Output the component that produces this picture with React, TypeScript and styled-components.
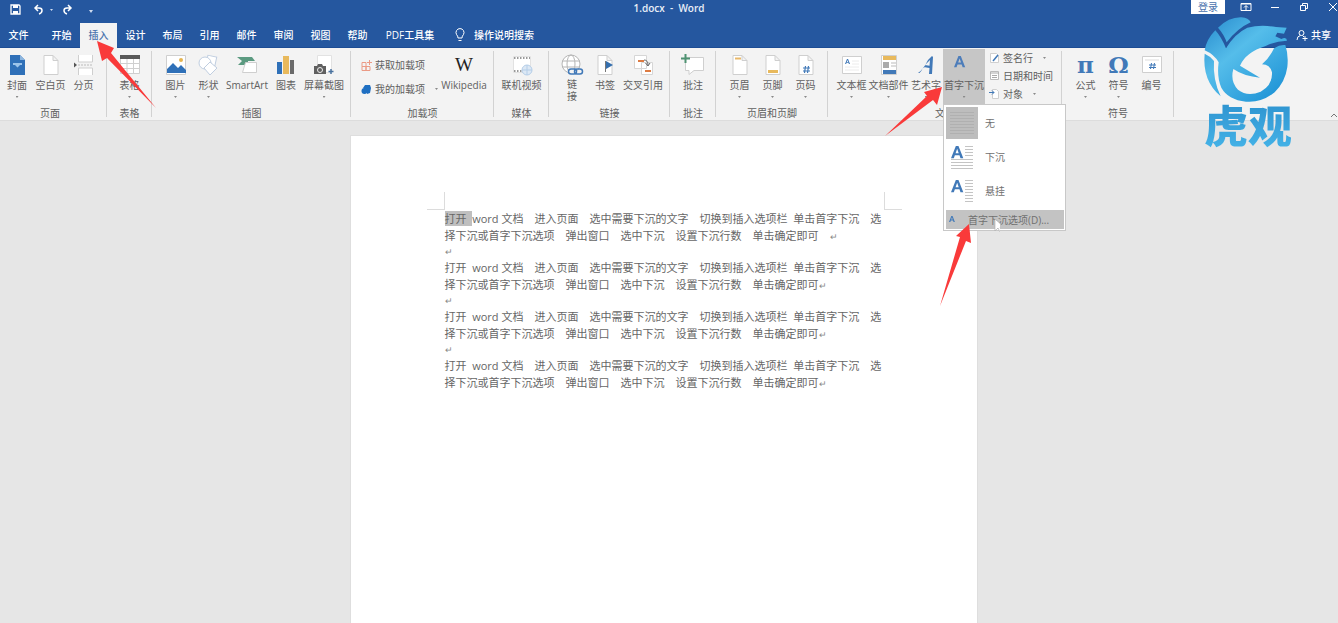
import React from 'react';
import styled, { createGlobalStyle } from 'styled-components';

const Global = createGlobalStyle`
  * { box-sizing: border-box; }
  body { margin: 0; background: #e6e6e6; }
  button { border: 0; margin: 0; padding: 0; background: none; color: inherit; font: inherit; cursor: pointer; }
  svg { display: block; }
`;

const Shell = styled.div`
  position: relative;
  display: flex;
  flex-direction: column;
  min-height: 100vh;
  overflow: hidden;
  font-family: 'Open Sans', 'Noto Sans CJK SC', sans-serif;
  font-size: 10px;
  line-height: 14px;
  color: #606060;
`;

const TitleBar = styled.header`
  display: grid;
  grid-template-columns: 1fr auto 1fr;
  height: 23px;
  background: #25579f;
  color: #fff;
`;
const QuickAccess = styled.div`
  display: flex;
  align-items: center;
  gap: 8px;
  padding: 0 0 4px 10px;
`;
const DocTitle = styled.h1`
  margin: 0;
  padding-top: 1px;
  font-size: 10px;
  line-height: 14px;
  font-weight: 600;
  color: #e8eef7;
  white-space: pre;
`;
const WindowControls = styled.div`
  display: flex;
  justify-content: flex-end;
  align-items: flex-start;
`;
const SignIn = styled.button`
  width: 34px;
  height: 14px;
  margin-right: 6px;
  background: #fff;
  color: #4a72ad;
`;
const WindowButton = styled.button<{ $last?: boolean }>`
  display: flex;
  justify-content: ${p => (p.$last ? 'flex-end' : 'center')};
  align-items: center;
  width: ${p => (p.$last ? 20 : 29)}px;
  height: 14px;
`;

const TabBar = styled.nav`
  display: flex;
  height: 25px;
  background: #25579f;
  border-bottom: 1px solid #1c4c94;
  color: #fff;
  font-weight: 500;
`;
const Tab = styled.button<{ $active?: boolean; $first?: boolean; $wide?: boolean }>`
  flex: none;
  width: ${p => (p.$wide ? 68 : 37)}px;
  height: 25px;
  margin-right: ${p => (p.$first ? 6 : 0)}px;
  padding-bottom: 2px;
  background: ${p => (p.$active ? '#f3f3f3' : 'transparent')};
  color: ${p => (p.$active ? '#4a72ad' : '#fff')};
`;
const Search = styled.button`
  display: flex;
  align-items: center;
  gap: 8px;
  padding: 0 0 1px 10px;
`;
const Share = styled.button`
  display: flex;
  align-items: center;
  gap: 3px;
  margin-left: auto;
  padding: 0 7px 1px 0;
`;

const Ribbon = styled.div`
  display: flex;
  height: 73px;
  background: #f3f3f3;
  border-bottom: 1px solid #dcdcdc;
`;
const Group = styled.section<{ $width: number; $pad?: number; $end?: number }>`
  position: relative;
  display: flex;
  flex-direction: column;
  flex: none;
  width: ${p => p.$width}px;
  padding: 1px ${p => p.$end ?? 0}px 0 0;
  background: linear-gradient(#d2d2d2, #d2d2d2) right 3px / 1px 66px no-repeat;
  > div { padding-left: ${p => p.$pad ?? 0}px; }
`;
const Commands = styled.div<{ $center?: boolean }>`
  display: flex;
  justify-content: ${p => (p.$center ? 'center' : 'flex-start')};
  height: 55px;
`;
const GroupName = styled.h2`
  margin: 2px 0 0;
  font-size: 10px;
  line-height: 14px;
  font-weight: 400;
  text-align: center;
`;
const Command = styled.button<{ $width: number; $open?: boolean }>`
  display: flex;
  flex-direction: column;
  align-items: center;
  flex: none;
  width: ${p => p.$width}px;
  height: 55px;
  padding-top: 5px;
  background: ${p => (p.$open ? '#c6c6c6' : 'transparent')};
  white-space: nowrap;
`;
const CommandLabel = styled.span`
  display: flex;
  justify-content: center;
  width: 100%;
  margin-top: 2px;
  line-height: 14px;
`;
const TwoLines = styled.span`
  margin-top: 2px;
  line-height: 12px;
`;
const Caret = styled.span`
  width: 3px;
  height: 2px;
  margin-top: 4px;
  background: #8a8a8a;
  clip-path: polygon(0 0, 100% 0, 50% 100%);
`;
const SmallList = styled.div<{ $height: number; $top?: number }>`
  display: flex;
  flex-direction: column;
  padding-top: ${p => p.$top ?? 0}px;
  > button { height: ${p => p.$height}px; }
`;
const SmallCommand = styled.button`
  display: flex;
  align-items: center;
  gap: 3px;
  white-space: nowrap;
`;
const SideCaret = styled(Caret)`
  margin: 0 0 0 7px;
`;
const MenuAnchor = styled.div`
  position: relative;
  margin-right: 4px;
`;
const Menu = styled.div`
  position: absolute;
  z-index: 2;
  top: 100%;
  left: 0;
  width: 123px;
  padding: 1px 1px 1px 2px;
  background: #fff;
  border: 1px solid #c8c8c8;
  color: #707070;
`;
const MenuItem = styled.button`
  display: flex;
  align-items: center;
  gap: 7px;
  width: 100%;
  height: 34px;
`;
const Preview = styled.span<{ $selected?: boolean }>`
  display: flex;
  align-items: center;
  justify-content: center;
  width: 32px;
  height: 32px;
  background: ${p => (p.$selected ? '#bdbdbd' : 'transparent')};
`;
const MenuFooter = styled.button`
  display: flex;
  align-items: center;
  gap: 12px;
  width: 100%;
  height: 19px;
  margin-top: 2px;
  padding-left: 1px;
  background: #c3c3c3;
  white-space: nowrap;
`;
const Collapse = styled.button`
  align-self: flex-end;
  margin: 0 0 2px auto;
`;

const Workspace = styled.main`
  display: flex;
  flex: 1;
  justify-content: center;
  padding: 14px 11px 0 0;
  background: #e6e6e6;
`;
const Sheet = styled.article`
  width: 628px;
  padding: 56px 75px 0 76px;
  background: #fff;
  border: 1px solid #dedede;
  border-bottom: 0;
`;
const MarginMarks = styled.div`
  display: flex;
  justify-content: space-between;
`;
const Mark = styled.span<{ $side: 'left' | 'right' }>`
  width: 18px;
  height: 18px;
  border-bottom: 1px solid #dcdcdc;
  border-${p => (p.$side === 'left' ? 'right' : 'left')}: 1px solid #dcdcdc;
`;
const Paragraph = styled.p`
  margin: 0 0 15px;
  padding-left: 18px;
  font-size: 11px;
  line-height: 17px;
  color: #666;
  white-space: pre;
`;
const Line = styled.span`
  display: block;
  height: 17px;
`;
const Blank = styled(Line)`
  height: 0;
  line-height: 13px;
`;
const Return = styled.span`
  font-size: 9px;
  color: #888;
`;
const Selection = styled.mark`
  background: #bfbfbf;
  color: inherit;
`;

const Overlay = styled.svg`
  position: absolute;
  z-index: 4;
  top: 0;
  left: 0;
  pointer-events: none;
`;
const Watermark = styled.div`
  position: absolute;
  z-index: 3;
  top: 15px;
  right: 44px;
  width: 92px;
  pointer-events: none;
`;
const WatermarkName = styled.div`
  margin-top: -8px;
  font-family: 'Noto Sans CJK SC', sans-serif;
  font-size: 44px;
  line-height: 54px;
  font-weight: 900;
  text-align: center;
  white-space: nowrap;
  color: transparent;
  background: linear-gradient(#2c90cd, #45b4e8);
  background-clip: text;
`;

const Icon = ({ children, w = 22, h = 22, box }: { children: React.ReactNode; w?: number; h?: number; box?: string }) => (
  <svg width={w} height={h} viewBox={box ?? `0 0 ${w} ${h}`} fill="none" aria-hidden="true">{children}</svg>
);
const blue = '#4179b8';
const line = '#cfcfcf';
const Sheetlet = () => <path d="M4 1.500h9l5 5v14H4z M13 1.500v5h5" fill="#fff" stroke={line} />;
const letterA = 'M0 14L5.500 0h3L14 14h-3.200l-1.200-3.400H4.400L3.200 14z M5.200 8.200h3.600L7 3z';

const icons = {
  cover: <Icon><path d="M4 1h10l5 5v15H4z" fill="#2f70b8" /><path d="M14 1v5h5" fill="#8db6df" /><path d="M7 9h9v2h-2l-2.500 2.500L9 11H7z" fill="#9cc4ea" /></Icon>,
  blank: <Icon><Sheetlet /></Icon>,
  pageBreak: <Icon><path d="M5.500 1v7h14V1M5.500 21v-7h14v7" fill="#fff" stroke={line} /><path d="M5 11h15" stroke="#bbb" strokeDasharray="2 1" /><path d="M1 8.500l3 2.500-3 2.500z" fill="#555" /></Icon>,
  table: <Icon><path d="M1.500 2.500h19v17h-19z" fill="#fff" stroke={line} /><path d="M1 1h20v4H1z" fill="#595959" /><path d="M1 9.500h20M1 14.500h20M8 5v15M14.500 5v15" stroke={line} /></Icon>,
  picture: <Icon><path d="M1.500 1.500h19v19h-19z" fill="#fff" stroke={line} /><path d="M2 19v-4l6-6 5 5 3-3 5 5v3z" fill="#2f70b8" /><circle cx="16" cy="6" r="2" fill="#e5b450" /></Icon>,
  shapes: <Icon><path d="M9 2h9v9h-9z" fill="#fff" stroke="#c0cee0" transform="rotate(12 13 6)" /><circle cx="7" cy="9" r="6" fill="#fff" stroke="#c0cee0" /><path d="M12 8l7 6-7 7-6-7z" fill="#fff" stroke="#c0cee0" /></Icon>,
  smart: <Icon><path d="M1 3h15l3 4h-7v4H2l4-4z" fill="#5b9a80" /><path d="M9.500 8.500h11v10h-14z" fill="#fff" stroke={line} /></Icon>,
  chart: <Icon><path d="M2 8h5v12H2z" fill="#2f70b8" /><path d="M8 2h6v18H8z" fill="#e8b95c" /><path d="M15 6h4v14h-4z" fill="#6a6a6a" /></Icon>,
  shot: <Icon><path d="M4.500 1.500h14v17h-14z" fill="#fff" stroke="#e2e2e2" /><path d="M1 12h3l1-2h4l1 2h3v8H1z" fill="#606060" /><circle cx="7" cy="16" r="2.500" fill="#606060" stroke="#eee" /><path d="M18 15v5M15.500 17.500h5" stroke="#49729f" strokeWidth="1.500" /></Icon>,
  video: <Icon><path d="M2.500 2.500h17v16h-17z" fill="#fff" stroke="#e2e2e2" /><path d="M3 4h16M3 17h10" stroke="#999" strokeWidth="2" strokeDasharray="1.500 1.500" /><circle cx="16" cy="16" r="5" fill="#dce8f5" stroke="#b5cee8" /><path d="M11 16h10M16 11v10" stroke="#b5cee8" /></Icon>,
  link: <Icon w={24}><circle cx="11" cy="10" r="9" fill="#fff" stroke="#b5b5b5" /><ellipse cx="11" cy="10" rx="4" ry="9" stroke="#b5b5b5" /><path d="M2 7h18M2 13h18" stroke="#b5b5b5" /><rect x="8.500" y="15" width="8" height="5" rx="2.500" fill="#f3f3f3" stroke={blue} strokeWidth="1.500" /><rect x="14.500" y="15" width="8" height="5" rx="2.500" stroke={blue} strokeWidth="1.500" /></Icon>,
  bookmark: <Icon><Sheetlet /><path d="M11.500 7v11" stroke="#777" /><path d="M12 7l7 4-7 4z" fill="#356fae" /></Icon>,
  cross: <Icon><path d="M2.500 1.500h12v13h-12zM9.500 8.500h11v12h-11z" fill="#fff" stroke="#d6d6d6" /><path d="M6 7h6M13 17h6" stroke="#dd7b42" strokeWidth="2" /><path d="M12 6q4 0 4 5M13.500 9l2.500 3 2-3" stroke="#666" /></Icon>,
  comment: <Icon w={24}><path d="M4.500 3.500h18v13H13l-5 4v-4H4.500z" fill="#fff" stroke={line} /><path d="M4.500 0v9M0 4.500h9" stroke="#4f9272" strokeWidth="2" /></Icon>,
  header: <Icon><Sheetlet /><path d="M6 4.500h6" stroke="#e9b869" strokeWidth="2" /></Icon>,
  footer: <Icon><Sheetlet /><path d="M6 17.500h10" stroke="#e8b95c" strokeWidth="3" /></Icon>,
  pageNo: <Icon><Sheetlet /><path d="M10.500 12l-1 7M13.500 12l-1 7M8 14h7M8 17h7" stroke={blue} strokeWidth="1.200" /></Icon>,
  textBox: <Icon><path d="M1.500 2.500h19v17h-19z" fill="#fff" stroke={line} /><path d={letterA} fill={blue} transform="translate(4 5) scale(.36)" /><path d="M11 7h7M11 10h7M4 13h14M4 16h14" stroke="#ececec" /></Icon>,
  parts: <Icon><path d="M3.500 1.500h15v19h-15z" fill="#fff" stroke={line} /><path d="M5 2h13v4H5z" fill="#e8b95c" /><path d="M5 8h6v6H5z" fill="#aaa" /><path d="M13 9h5M13 12h5" stroke="#bbb" /><path d="M5 16h13v4H5z" fill={blue} /></Icon>,
  wordArt: <Icon><path d="M3 19q5-3 10-13l4-4 1 1-1 17h-3l.5-6-6-1q-2 4-4 6zM10 11l4.500.8L15 6z" fill={blue} /></Icon>,
  dropCap: <Icon><path d={letterA} fill="#4d7dba" transform="translate(1 2) scale(.8)" /></Icon>,
  numbering: <Icon><path d="M1.500 2.500h19v16h-19z" fill="#fff" stroke={line} /><path d="M4 6h14" stroke="#ddd" /><path d="M10.500 9l-1 6M13.500 9l-1 6M8 11h7M8 13.500h7" stroke={blue} /></Icon>,
};

const SymbolGlyph = styled.span`
  height: 22px;
  font-family: 'DejaVu Serif', serif;
  font-size: 23px;
  line-height: 22px;
  font-weight: 700;
  color: ${blue};
`;
const WikiGlyph = styled(SymbolGlyph)`
  font-family: 'Liberation Serif', serif;
  font-size: 19px;
  font-weight: 400;
  color: #222;
`;

type Cmd = { icon: React.ReactNode; label: string; width: number; caret?: boolean };
const RibbonCommand = ({ icon, label, width, caret }: Cmd) => (
  <Command $width={width}>
    {icon}
    <CommandLabel>{label}</CommandLabel>
    {caret && <Caret />}
  </Command>
);
type GroupProps = { name: string; width: number; pad?: number; end?: number; center?: boolean; items: Cmd[]; children?: React.ReactNode };
const RibbonGroup = ({ name, width, pad, end, center, items, children }: GroupProps) => (
  <Group $width={width} $pad={pad} $end={end} aria-label={name}>
    <Commands $center={center}>
      {items.map(c => <RibbonCommand key={c.label} {...c} />)}
      {children}
    </Commands>
    <GroupName>{name}</GroupName>
  </Group>
);

const DropPreview = ({ hanging }: { hanging?: boolean }) => (
  <Icon w={24} h={26}>
    <path d={letterA} fill={blue} transform="translate(1 2) scale(.88)" />
    <path d={hanging ? 'M15 2.500h8M15 5.500h8M15 8.500h8M15 11.500h8M15 14.500h8M15 17.500h8M15 20.500h8M15 23.500h8' : 'M15 2.500h8M15 5.500h8M15 8.500h8M15 11.500h8M1 15.500h22M1 18.500h22M1 21.500h22M1 24.500h22'} stroke="#c4c4c4" />
  </Icon>
);

const DropCapMenu = () => (
  <Menu role="menu">
    <MenuItem role="menuitem">
      <Preview $selected><Icon w={24} h={26}><path d="M0 2.500h24M0 5.500h24M0 8.500h24M0 11.500h24M0 14.500h24M0 17.500h24M0 20.500h24M0 23.500h24" stroke="#b0b0b0" /></Icon></Preview>无
    </MenuItem>
    <MenuItem role="menuitem"><Preview><DropPreview /></Preview>下沉</MenuItem>
    <MenuItem role="menuitem"><Preview><DropPreview hanging /></Preview>悬挂</MenuItem>
    <MenuFooter role="menuitem">
      <Icon w={9} h={10}><path d={letterA} fill={blue} transform="translate(2 1) scale(.42)" /></Icon>首字下沉选项(D)...
    </MenuFooter>
  </Menu>
);

const tabs = ['文件', '开始', '插入', '设计', '布局', '引用', '邮件', '审阅', '视图', '帮助', 'PDF工具集'];

const first = 'word\u00a0文档　进入页面　选中需要下沉的文字　切换到插入选项栏\u00a0\u00a0单击首字下沉　选';
const second = '择下沉或首字下沉选项　弹出窗口　选中下沉　设置下沉行数　单击确定即可';

const BodyText = ({ selected }: { selected?: boolean }) => (
  <>
    <Line>{selected ? <Selection>打开{'\u00a0\u00a0'}</Selection> : <>打开{'\u00a0\u00a0'}</>}{first}</Line>
    <Line>{second}{selected && '　'}<Return>↵</Return></Line>
  </>
);

export default function App() {
  return (
    <Shell>
      <Global />
      <TitleBar>
        <QuickAccess>
          <button aria-label="保存"><Icon w={11} h={11}><path d="M1 1h8l1 1v8H1z" stroke="#fff" strokeWidth="1.300" /><path d="M3 1h5v3H3zM3 7h5v3H3z" fill="#fff" /></Icon></button>
          <button aria-label="撤消"><Icon w={24} h={11}><path d="M5 1L2 4l3 3M2 4h4q3 0 3 2.500T6 10" stroke="#fff" strokeWidth="1.500" transform="translate(4)" /><path d="M21 5h3l-1.500 2z" fill="#cfdcf0" /></Icon></button>
          <button aria-label="恢复"><Icon w={12} h={11}><path d="M7 1l3 3-3 3M10 4H6q-3 0-3 2.500T6 10" stroke="#fff" strokeWidth="1.500" /></Icon></button>
          <button aria-label="自定义快速访问工具栏"><Icon w={18} h={11}><path d="M8 4.500h4M8 6h4l-2 3z" fill="#cfdcf0" /></Icon></button>
        </QuickAccess>
        <DocTitle>1.docx  -  Word</DocTitle>
        <WindowControls>
          <SignIn>登录</SignIn>
          <WindowButton aria-label="功能区显示选项"><Icon w={12} h={10}><path d="M1 1.500h10v7H1z" stroke="#fff" /><path d="M1 2h10M6 8V4M4 5.500l2-2 2 2" stroke="#fff" /></Icon></WindowButton>
          <WindowButton aria-label="最小化"><Icon w={10} h={10}><path d="M1 5.500h8" stroke="#fff" /></Icon></WindowButton>
          <WindowButton aria-label="还原"><Icon w={10} h={10}><path d="M1.500 3.500h5v5h-5zM3.500 3V1.500h5v5H7" stroke="#fff" /></Icon></WindowButton>
          <WindowButton $last aria-label="关闭"><Icon w={10} h={10}><path d="M1 1l8 8M9 1L1 9" stroke="#fff" /></Icon></WindowButton>
        </WindowControls>
      </TitleBar>
      <TabBar>
        {tabs.map((t, i) => <Tab key={t} $first={i === 0} $active={t === '插入'} $wide={i === 10}>{t}</Tab>)}
        <Search>
          <Icon w={12} h={14}><path d="M4 10q0-2-1.500-3.500a4 4 0 1 1 7 0Q8 8 8 10zM4.500 12.500h3" stroke="#fff" /></Icon>
          操作说明搜索
        </Search>
        <Share>
          <Icon w={12} h={12}><circle cx="5.500" cy="4" r="2.500" stroke="#fff" /><path d="M1 11q0-4 3.500-4.500M6.500 6.500L8 8M9 7v5M6.500 9.500h5" stroke="#fff" /></Icon>
          共享
        </Share>
      </TabBar>
      <Ribbon>
        <RibbonGroup name="页面" width={107} end={7} items={[
          { icon: icons.cover, label: '封面', width: 34, caret: true },
          { icon: icons.blank, label: '空白页', width: 33 },
          { icon: icons.pageBreak, label: '分页', width: 33 },
        ]} />
        <RibbonGroup name="表格" width={45} center items={[{ icon: icons.table, label: '表格', width: 33, caret: true }]} />
        <RibbonGroup name="插图" width={199} pad={7} items={[
          { icon: icons.picture, label: '图片', width: 33, caret: true },
          { icon: icons.shapes, label: '形状', width: 33, caret: true },
          { icon: icons.smart, label: 'SmartArt', width: 44 },
          { icon: icons.chart, label: '图表', width: 34 },
          { icon: icons.shot, label: '屏幕截图', width: 42, caret: true },
        ]} />
        <Group $width={143} $pad={10} aria-label="加载项">
          <Commands>
            <SmallList $height={24} $top={4}>
              <SmallCommand><Icon w={11} h={11}><path d="M1 2.500h4v4H1zM1 6.500h4v4H1zM5 6.500h4v4H5zM8.500 0v5M6 2.500h5" stroke="#eb9a85" /></Icon>获取加载项</SmallCommand>
              <SmallCommand><Icon w={11} h={11}><path d="M4 1l5 0 1 3-1 5-3 1V6L2 4z" fill="#1f6fc2" /><circle cx="3.500" cy="7" r="3" fill="#1f6fc2" /></Icon>我的加载项<SideCaret /></SmallCommand>
            </SmallList>
            <Command $width={52}>
              <WikiGlyph>W</WikiGlyph>
              <CommandLabel>Wikipedia</CommandLabel>
            </Command>
          </Commands>
          <GroupName>加载项</GroupName>
        </Group>
        <RibbonGroup name="媒体" width={55} center items={[{ icon: icons.video, label: '联机视频', width: 42 }]} />
        <Group $width={121} $pad={7} aria-label="链接">
          <Commands>
            <Command $width={32}>{icons.link}<TwoLines>链<br />接</TwoLines></Command>
            <RibbonCommand icon={icons.bookmark} label="书签" width={34} />
            <RibbonCommand icon={icons.cross} label="交叉引用" width={42} />
          </Commands>
          <GroupName>链接</GroupName>
        </Group>
        <RibbonGroup name="批注" width={46} center items={[{ icon: icons.comment, label: '批注', width: 33 }]} />
        <RibbonGroup name="页眉和页脚" width={112} pad={7} items={[
          { icon: icons.header, label: '页眉', width: 33, caret: true },
          { icon: icons.footer, label: '页脚', width: 33, caret: true },
          { icon: icons.pageNo, label: '页码', width: 33, caret: true },
        ]} />
        <RibbonGroup name="文本" width={234} pad={7} items={[
          { icon: icons.textBox, label: '文本框', width: 33, caret: true },
          { icon: icons.parts, label: '文档部件', width: 41, caret: true },
          { icon: icons.wordArt, label: '艺术字', width: 34, caret: true },
        ]}>
          <MenuAnchor>
            <Command $width={42} $open aria-haspopup="menu" aria-expanded="true">
              {icons.dropCap}<CommandLabel>首字下沉</CommandLabel><Caret />
            </Command>
            <DropCapMenu />
          </MenuAnchor>
          <SmallList $height={18}>
            <SmallCommand><Icon w={11} h={12}><path d="M1.500 1.500h6l2 2v7h-8z" fill="#fff" stroke={line} /><path d="M4 9l5-6" stroke={blue} strokeWidth="1.500" /></Icon>签名行<SideCaret /></SmallCommand>
            <SmallCommand><Icon w={11} h={12}><path d="M1.500 1.500h8v8h-8z" fill="#fff" stroke="#bbb" /><path d="M1 3h9M3 5.500h5M3 7.500h5" stroke="#aaa" /></Icon>日期和时间</SmallCommand>
            <SmallCommand><Icon w={11} h={12}><path d="M3.500 1.500h4l2 2v7h-6z" fill="#fff" stroke={line} /><path d="M0 4.500h5M3 2.500l2 2-2 2" stroke={blue} /></Icon>对象<SideCaret /></SmallCommand>
          </SmallList>
        </RibbonGroup>
        <RibbonGroup name="符号" width={112} pad={7} items={[
          { icon: <SymbolGlyph>π</SymbolGlyph>, label: '公式', width: 33, caret: true },
          { icon: <SymbolGlyph>Ω</SymbolGlyph>, label: '符号', width: 33, caret: true },
          { icon: icons.numbering, label: '编号', width: 33 },
        ]} />
        <Collapse aria-label="折叠功能区"><Icon w={8} h={6}><path d="M1 5l3-3 3 3" stroke="#777" /></Icon></Collapse>
      </Ribbon>
      <Workspace>
        <Sheet>
          <MarginMarks><Mark $side="left" /><Mark $side="right" /></MarginMarks>
          {[0, 1, 2, 3].map(i => (
            <Paragraph key={i}>
              <BodyText selected={i === 0} />
              {i < 3 && <Blank><Return>↵</Return></Blank>}
            </Paragraph>
          ))}
        </Sheet>
      </Workspace>
      <Watermark>
        <svg width="92" height="90" viewBox="14 20 276 270" aria-hidden="true">
          <defs>
            <linearGradient id="tiger" gradientUnits="userSpaceOnUse" x1="40" y1="30" x2="240" y2="270">
              <stop offset="0" stopColor="#2b8fd0" /><stop offset=".4" stopColor="#55bdea" /><stop offset="1" stopColor="#1e93d6" />
            </linearGradient>
          </defs>
          <g fill="url(#tiger)">
            <path d="M62 58Q95 26 132 27Q154 28 160 42Q120 60 88 102Q80 78 62 58Z" />
            <path d="M54 66Q72 86 86 120Q112 76 150 58Q190 48 236 56L268 58L260 76L240 73L234 84L252 92Q268 84 269 97Q235 98 205 113Q145 132 128 172L188 208Q140 204 108 182Q98 220 122 244Q150 266 190 250Q226 230 224 192Q218 168 194 168Q218 146 230 120Q248 108 264 110Q274 140 270 176Q264 220 232 252Q192 284 146 280Q92 274 72 238Q58 206 64 162Q50 138 22 126Q28 92 54 66Z" />
            <path d="M22 136Q40 144 50 158Q46 214 70 264Q14 216 22 136Z" />
          </g>
        </svg>
        <WatermarkName>虎观</WatermarkName>
      </Watermark>
      <Overlay width="1000" height="310" aria-hidden="true">
        <g fill="#f93a3a">
          <path d="M97 41L114 48L111 53L156 108L107 58L102 61Z" />
          <path d="M942 87L937 105L933 100L885 136L927 96L924 92Z" />
          <path d="M969 224L971 243L966 241L940 306L960 237L956 236Z" />
        </g>
        <path d="M995 219v12l3-3 2 4 2-1-2-4h4z" fill="#fff" stroke="#aaa" strokeWidth=".6" />
      </Overlay>
    </Shell>
  );
}
